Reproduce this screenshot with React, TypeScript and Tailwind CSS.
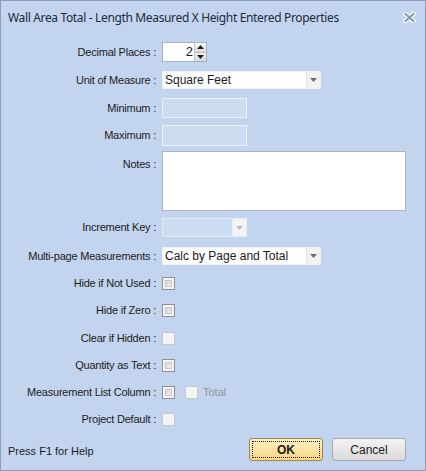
import React from 'react'

const LABEL_W = 'w-[157px]'

function Label({ text }: { text: string }) {
  return <div className={`${LABEL_W} shrink-0 text-right pr-[2px] whitespace-nowrap tracking-[-0.22px]`}>{text} :</div>
}

function Check({ disabled }: { disabled?: boolean }) {
  return disabled ? (
    <div className="w-[13px] h-[13px] border border-[#c4c8cd] bg-[#f4f4f4]" />
  ) : (
    <div className="w-[13px] h-[13px] border border-[#8e9092] bg-[#f4f4f4] p-[2px]">
      <div className="w-full h-full bg-gradient-to-br from-[#d6d6d6] to-[#f0f0f0] border border-[#c9c9c9]" />
    </div>
  )
}

function Arrow({ color = '#6d6d6d' }: { color?: string }) {
  return (
    <svg width="7" height="4" viewBox="0 0 7 4">
      <path d="M0 0 H7 L3.5 4 Z" fill={color} />
    </svg>
  )
}

function Combo({ value, disabled, w }: { value?: string; disabled?: boolean; w: string }) {
  return (
    <div className={`${w} h-full flex border ${disabled ? 'border-[#e4ebf5] bg-[#ccdcf1]' : 'border-[#f0f0f0] bg-white'}`}>
      <div className="flex-1 pl-[2px] text-[12px] leading-[16px] flex items-center">{value}</div>
      <div className={`w-[14px] flex items-center justify-center border-l ${disabled ? 'border-[#e4ebf5] bg-[#f2f4f7]' : 'border-[#e2e2e2] bg-[#f2f2f2]'}`}>
        <Arrow color={disabled ? '#b8bcc2' : '#6d6d6d'} />
      </div>
    </div>
  )
}

export default function App() {
  return (
    <div
      className="w-[426px] h-[471px] bg-[#c3d5ee] border border-[#8c9cb4] flex flex-col text-[11px] text-[#1b1b1b] overflow-hidden"
      style={{ fontFamily: '"Liberation Sans", Arial, sans-serif' }}
    >
      {/* title bar */}
      <div className="h-[40px] shrink-0 flex items-start justify-between pl-[7px] pr-[9px] pt-[8px]">
        <div className="text-[12px] tracking-[-0.35px] text-[#1e2a3a]" style={{ fontFamily: '"Noto Sans", sans-serif' }}>
          Wall Area Total - Length Measured X Height Entered Properties
        </div>
        <svg width="13" height="11" viewBox="0 0 13 11" className="mt-[3px]">
          <path d="M2.5 2 L10.5 9 M10.5 2 L2.5 9" stroke="#f4f7fb" strokeWidth="4.6" strokeLinecap="round" />
          <path d="M2.5 2 L10.5 9 M10.5 2 L2.5 9" stroke="#8a9ab2" strokeWidth="2.2" strokeLinecap="round" />
        </svg>
      </div>

      <div className="flex flex-col">
        {/* Decimal places */}
        <div className="h-[20px] mt-[1px] flex items-center gap-[4px]">
          <Label text="Decimal Places" />
          <div className="w-[45px] h-full flex border border-[#a6b3c4] bg-white">
            <div className="flex-1 text-right pr-[1px] text-[13px] leading-[18px]">2</div>
            <div className="w-[12px] flex flex-col border-l border-[#c8c8c8]">
              <div className="flex-1 flex items-center justify-center bg-gradient-to-b from-[#f6f6f6] to-[#dcdcdc] border-b border-[#b8b8b8]">
                <svg width="7" height="4" viewBox="0 0 7 4"><path d="M0 4 H7 L3.5 0 Z" fill="#222" /></svg>
              </div>
              <div className="flex-1 flex items-center justify-center bg-gradient-to-b from-[#f0f0f0] to-[#d8d8d8]">
                <Arrow color="#222" />
              </div>
            </div>
          </div>
        </div>

        {/* Unit of measure */}
        <div className="h-[18px] mt-[9px] flex items-center gap-[4px]">
          <Label text="Unit of Measure" />
          <Combo w="w-[159px]" value="Square Feet" />
        </div>

        <div className="h-[20px] mt-[9px] flex items-center gap-[4px]">
          <Label text="Minimum" />
          <div className="w-[85px] h-full border border-[#eef3fa] bg-[#ccdcf1]" />
        </div>

        <div className="h-[21px] mt-[7px] flex items-center gap-[4px]">
          <Label text="Maximum" />
          <div className="w-[85px] h-full border border-[#eef3fa] bg-[#ccdcf1]" />
        </div>

        <div className="h-[60px] mt-[5px] flex items-start gap-[4px]">
          <div className="pt-[5px]"><Label text="Notes" /></div>
          <div className="w-[244px] h-full border border-[#a9b4c4] bg-white" />
        </div>

        <div className="h-[19px] mt-[7px] flex items-center gap-[4px]">
          <Label text="Increment Key" />
          <Combo w="w-[85px]" disabled />
        </div>

        <div className="h-[18px] mt-[10px] flex items-center gap-[4px]">
          <Label text="Multi-page Measurements" />
          <Combo w="w-[159px]" value="Calc by Page and Total" />
        </div>

        {[
          { label: 'Hide if Not Used', disabled: false, mt: 'mt-[11px]' },
          { label: 'Hide if Zero', disabled: false, mt: 'mt-[13px]' },
          { label: 'Clear if Hidden', disabled: true, mt: 'mt-[14px]' },
          { label: 'Quantity as Text', disabled: false, mt: 'mt-[13px]' },
        ].map((r) => (
          <div key={r.label} className={`h-[14px] ${r.mt} flex items-center gap-[4px]`}>
            <Label text={r.label} />
            <Check disabled={r.disabled} />
          </div>
        ))}

        <div className="h-[14px] mt-[13px] flex items-center gap-[4px]">
          <Label text="Measurement List Column" />
          <Check />
          <div className="ml-[6px]"><Check disabled /></div>
          <span className="ml-[1px] text-[#8d949c]">Total</span>
        </div>

        <div className="h-[14px] mt-[13px] flex items-center gap-[4px]">
          <Label text="Project Default" />
          <Check disabled />
        </div>

        {/* footer */}
        <div className="h-[23px] mt-[12px] flex items-center pl-[7px] pr-[19px]">
          <div className="flex-1 pt-[4px]">Press F1 for Help</div>
          <button className="w-[74px] h-full rounded-[3px] border border-[#9b8550] bg-gradient-to-b from-[#fdf0c4] to-[#f9d680] p-[2px]">
            <div className="w-full h-full border border-dotted border-[#222] flex items-center justify-center font-bold text-[12px]">OK</div>
          </button>
          <button className="w-[74px] h-full ml-[9px] rounded-[3px] border border-[#a9a9a9] bg-gradient-to-b from-[#f3f3f3] to-[#dadada] text-[12px]">
            Cancel
          </button>
        </div>
      </div>
    </div>
  )
}
